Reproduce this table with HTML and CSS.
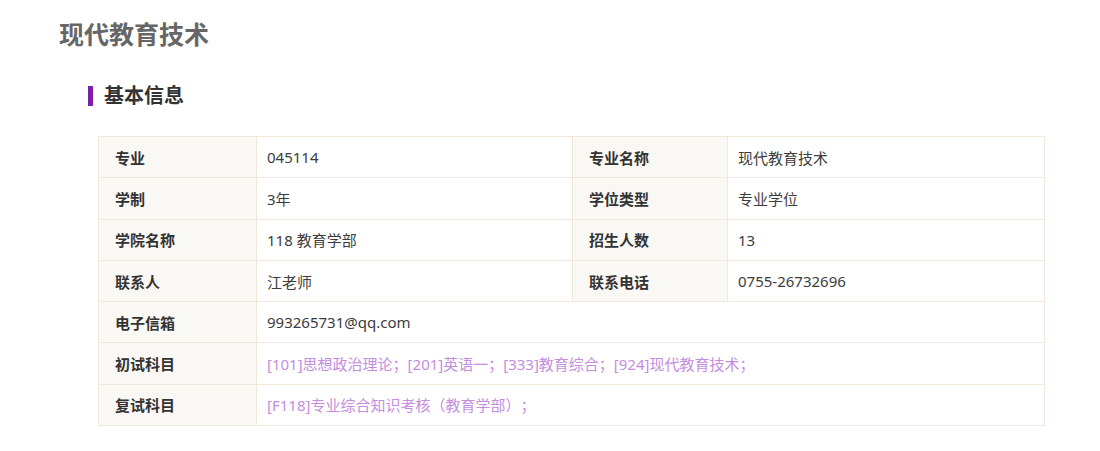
FILE: index.html
```html
<!DOCTYPE html>
<html lang="zh">
<head>
<meta charset="utf-8">
<title>现代教育技术</title>
<link rel="stylesheet" href="styles.css">
</head>
<body>
<div class="page">
  <h1 class="title">现代教育技术</h1>
  <div class="section">
    <h2 class="section-title"><span class="bar"></span>基本信息</h2>
    <table class="info">
      <colgroup>
        <col class="c1"><col class="c2"><col class="c3"><col class="c4">
      </colgroup>
      <tr><th>专业</th><td>045114</td><th>专业名称</th><td>现代教育技术</td></tr>
      <tr><th>学制</th><td>3年</td><th>学位类型</th><td>专业学位</td></tr>
      <tr><th>学院名称</th><td>118 教育学部</td><th>招生人数</th><td>13</td></tr>
      <tr><th>联系人</th><td>江老师</td><th>联系电话</th><td>0755-26732696</td></tr>
      <tr><th>电子信箱</th><td colspan="3">993265731@qq.com</td></tr>
      <tr><th>初试科目</th><td colspan="3" class="subj">[101]思想政治理论；[201]英语一；[333]教育综合；[924]现代教育技术；</td></tr>
      <tr><th>复试科目</th><td colspan="3" class="subj">[F118]专业综合知识考核（教育学部）；</td></tr>
    </table>
  </div>
</div>
</body>
</html>
```

FILE: styles.css
```css
html, body {
  margin: 0;
  padding: 0;
  background: #fff;
}
body {
  font-family: "Noto Sans", "Noto Sans CJK SC", sans-serif;
  color: #333;
  text-spacing-trim: space-all;
}
.page {
  padding: 18px 0 0 59px;
}
.title {
  margin: 0;
  font-size: 25px;
  line-height: 32px;
  font-weight: bold;
  color: #666;
}
.section {
  padding: 0 0 0 29px;
}
.section-title {
  margin: 33px 0 27px 0;
  display: flex;
  align-items: center;
  font-size: 20px;
  line-height: 26px;
  font-weight: bold;
  color: #333;
}
.bar {
  display: inline-block;
  width: 5px;
  height: 20px;
  background: #7d1fa7;
  margin-right: 11px;
}
.info {
  margin-left: 10px;
  border-collapse: collapse;
  width: 946px;
  table-layout: fixed;
  font-size: 15px;
}
.c1 { width: 158px; }
.c2 { width: 316px; }
.c3 { width: 155px; }
.c4 { width: 317px; }
.info tr {
  height: 41.3px;
}
.info th, .info td {
  border: 1px solid #f3e6da;
  padding: 0;
  text-align: left;
  vertical-align: middle;
  white-space: nowrap;
}
.info th {
  background: #faf8f5;
  font-weight: bold;
  color: #333;
  padding-left: 16px;
}
.info td {
  background: #fff;
  color: #3c3c3c;
  padding-left: 10px;
}
.info td.subj {
  color: #c48de0;
}
```
